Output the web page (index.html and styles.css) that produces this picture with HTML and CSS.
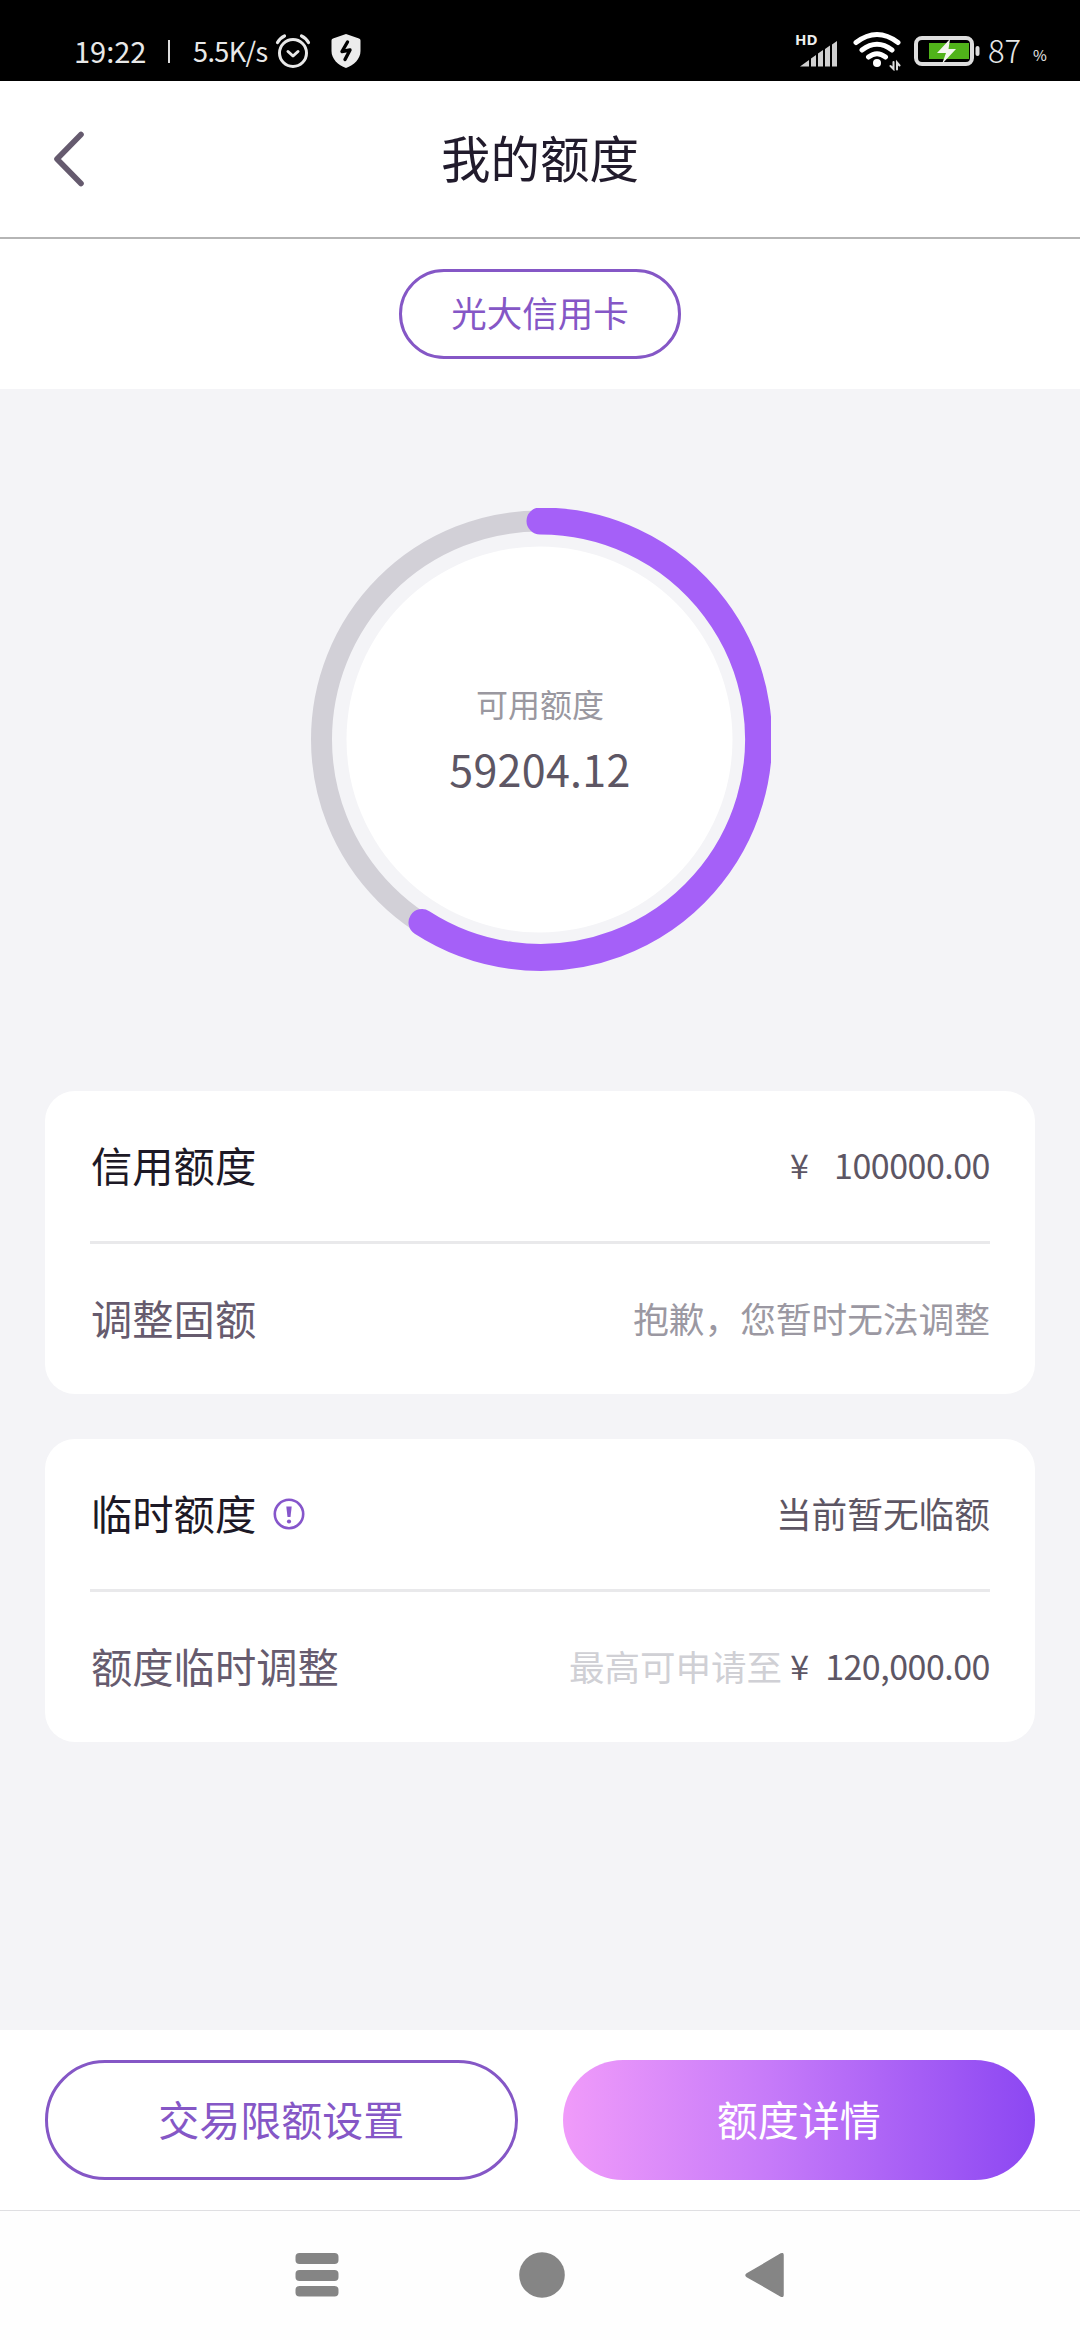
FILE: index.html
```html
<!DOCTYPE html>
<html lang="zh-CN">
<head>
<meta charset="utf-8">
<title>我的额度</title>
<link rel="stylesheet" href="styles.css">
</head>
<body>
<div class="screen">
  <div class="status">
    <span class="time">19:22</span>
    <span class="bar"></span>
    <span class="speed">5.5K/s</span>
    <svg class="alarm" width="36" height="36" viewBox="0 0 36 36" fill="none" stroke="#e8e8e8" stroke-linecap="round">
      <circle cx="18" cy="20" r="13.5" stroke-width="3"/>
      <path d="M13 18.5l5 4.5 5-4.5" stroke-width="3" stroke-linejoin="round"/>
      <path d="M2.5 9.5Q5 5 9.5 3M33.500 9.500Q31 5 26.500 3" stroke-width="3.200"/>
    </svg>
    <svg class="shield" width="30" height="36" viewBox="0 0 30 36">
      <path d="M15 1L28 5.500Q29.500 6 29.500 7.500V18C29.500 26 23 32 15 35C7 32 .5 26 .5 18V7.500Q.5 6 2 5.500Z" fill="#ececec"/>
      <path d="M16.500 9L11 18.500L19 17L14 26.500" fill="none" stroke="#000" stroke-width="3.400" stroke-linejoin="round" stroke-linecap="round"/>
    </svg>
    <span class="spacer"></span>
    <span class="signal">
      <span class="hd">HD</span>
      <svg class="bars" width="38" height="26" viewBox="0 0 38 26" fill="#cfcfcf">
        <path d="M0 25.500L9 19V25.500ZM11 17.500L16 14V25.500H11ZM18 12.500L23 9V25.500H18ZM25 8L30 4.500V25.500H25ZM32 3.500L37 0V25.500H32Z"/>
      </svg>
    </span>
    <svg class="wifi" width="48" height="40" viewBox="0 0 48 40" fill="none" stroke="#fff" stroke-width="5" stroke-linecap="round">
      <path d="M3 11.500Q24 -4.500 45 11.500M9 19Q24 7.500 39 19M15.500 26Q24 19.500 32.500 26"/>
      <circle cx="24" cy="32" r="4" fill="#fff" stroke="none"/>
      <path d="M40.500 31V38L37.500 35M44 38.500V31.500L46.500 34.500" stroke="#ddd" stroke-width="2"/>
    </svg>
    <svg class="battery" width="66" height="32" viewBox="0 0 66 32">
      <rect x="2" y="3" width="56" height="26" rx="6" fill="none" stroke="#dedede" stroke-width="4"/>
      <rect x="15" y="8" width="40" height="16" fill="#50b31a"/>
      <rect x="61.500" y="11" width="4" height="10" rx="2" fill="#dedede"/>
      <path d="M36 4L23 18H32L28 29L42 14H34.500Z" fill="#f2f6ef"/>
    </svg>
    <span class="level">87</span>
    <span class="percent">%</span>
  </div>

  <header class="title-bar">
    <svg class="back" width="34" height="60" viewBox="0 0 34 60" fill="none" stroke="#655a6e" stroke-width="5.600" stroke-linecap="round" stroke-linejoin="round">
      <path d="M29 5.500L5 30L29 54.500"/>
    </svg>
    <h1 class="title">我的额度</h1>
  </header>

  <div class="card-picker"><span class="chip">光大信用卡</span></div>

  <main class="content">
    <div class="gauge">
      <svg class="ring" width="462" height="463" viewBox="0 0 462 463" fill="none">
        <circle cx="231" cy="231.500" r="218.500" stroke="#d2d0d7" stroke-width="21"/>
        <circle cx="230.500" cy="231.500" r="193" fill="#fff"/>
        <path d="M231 13A218.200 218.200 0 1 1 113 414.500" stroke="#a560f8" stroke-width="27" stroke-linecap="round"/>
      </svg>
      <div class="gauge-text">
        <div class="gauge-label">可用额度</div>
        <div class="gauge-value">59204.12</div>
      </div>
    </div>

    <section class="panel">
      <div class="row">
        <span class="name strong">信用额度</span>
        <span class="amount"><span class="yen wide">¥</span><span class="num">100000.00</span></span>
      </div>
      <div class="row">
        <span class="name">调整固额</span>
        <span class="note muted">抱歉，您暂时无法调整</span>
      </div>
    </section>

    <section class="panel">
      <div class="row">
        <span class="name strong">临时额度</span>
        <svg class="info" width="32" height="32" viewBox="0 0 32 32">
          <circle cx="16" cy="16" r="14.200" fill="none" stroke="#8656cb" stroke-width="2.600"/>
          <path d="M13.300 8.500H18.700L17.500 19H14.500Z" fill="#8656cb"/>
          <circle cx="16" cy="23.500" r="2.100" fill="#8656cb"/>
        </svg>
        <span class="note">当前暂无临额</span>
      </div>
      <div class="row">
        <span class="name">额度临时调整</span>
        <span class="amount"><span class="faint">最高可申请至</span><span class="yen">¥</span><span class="num">120,000.00</span></span>
      </div>
    </section>
  </main>

  <footer class="actions">
    <div class="btn outline">交易限额设置</div>
    <div class="btn filled">额度详情</div>
  </footer>

  <nav class="nav">
    <svg width="44" height="46" viewBox="0 0 44 46" fill="#858585">
      <rect x=".5" y="1" width="43" height="11" rx="4"/>
      <rect x=".5" y="18" width="43" height="11" rx="4"/>
      <rect x=".5" y="34" width="43" height="10.500" rx="4"/>
    </svg>
    <svg width="46" height="46" viewBox="0 0 46 46"><circle cx="23" cy="23" r="22.800" fill="#858585"/></svg>
    <svg width="40" height="46" viewBox="0 0 40 46"><path d="M2 22L36 2Q38 1 38 3V43Q38 45 36 44L2 24.500Q0 23.300 2 22Z" fill="#858585" stroke="#858585" stroke-width="1.500"/></svg>
  </nav>
</div>
</body>
</html>
```

FILE: styles.css
```css
* { box-sizing: border-box; }
body {
  margin: 0;
  background: #fff;
  font-family: "Noto Sans CJK SC", sans-serif;
  color: #5d5664;
}
svg { display: block; flex: none; }
.screen {
  width: 1080px;
  height: 2340px;
  display: flex;
  flex-direction: column;
  overflow: hidden;
  white-space: nowrap;
}

/* status bar */
.status {
  flex: none;
  height: 81px;
  padding: 21px 35px 0 74px;
  background: #000;
  color: #e8e8e8;
  display: flex;
  align-items: center;
  line-height: 60px;
}
.time { width: 94px; font-size: 29px; padding-bottom: 2px; }
.bar { width: 2px; height: 23px; background: #ddd; }
.speed { width: 82px; margin-left: 23px; font-size: 27px; letter-spacing: -0.6px; padding-bottom: 1px; }
.alarm { margin: 0 20px 0 0; }
.spacer { flex: 1; }
.signal { width: 44px; margin-right: 14px; height: 32px; display: grid; }
.signal > * { grid-area: 1 / 1; }
.hd { font: bold 15px/9px "Open Sans", sans-serif; color: #eee; }
.bars { align-self: end; margin-left: 5px; }
.wifi { margin-right: 13px; }
.level { width: 45px; margin-left: 8px; font-size: 31px; font-weight: 300; padding-bottom: 3px; }
.percent { width: 12px; font-size: 15px; padding-top: 8px; }

/* header */
.title-bar {
  flex: none;
  height: 158px;
  border-bottom: 2px solid #b5b5b5;
  display: grid;
  grid-template-columns: 84px 1fr 84px;
  align-items: center;
}
.back { margin-left: 52px; }
.title { margin: 0; padding-bottom: 5px; text-align: center; font-size: 49.5px; line-height: 70px; font-weight: 400; color: #211b2c; }
.card-picker { flex: none; height: 150px; display: flex; align-items: center; justify-content: center; }
.chip {
  width: 282px;
  height: 90px;
  border: 3px solid #8557c6;
  border-radius: 45px;
  color: #8557c6;
  font-size: 35.5px;
  line-height: 80px;
  text-align: center;
}

/* content */
.content {
  flex: 1;
  background: #f4f4f7;
  padding: 119px 45px 0;
  display: flex;
  flex-direction: column;
  gap: 45px;
}
.gauge { width: 462px; height: 463px; margin: 0 auto 75px; display: grid; }
.gauge > * { grid-area: 1 / 1; }
.gauge-text { text-align: center; padding-top: 170px; }
.gauge-label { font-size: 32px; line-height: 50px; color: #9a98a0; }
.gauge-value { font-size: 43px; line-height: 60px; margin-top: 10px; letter-spacing: 0.3px; }
.panel { height: 303px; background: #fff; border-radius: 30px; padding: 0 45px; }
.row { height: 150px; padding-bottom: 4px; display: flex; align-items: center; }
.row + .row { height: 153px; border-top: 3px solid #e9e9eb; }
.name { font-size: 41.3px; padding-left: 1px; color: #665b6e; }
.strong { color: #1d1926; }
.note, .amount { margin-left: auto; font-size: 35.7px; }
.amount { display: flex; align-items: center; }
.muted { color: #9b98a2; }
.faint { font-size: 35.5px; color: #d0d0d5; }
.yen { width: 20px; margin: 0 15px 0 8px; font-size: 34px; }
.yen.wide { margin-right: 24px; }
.num { font-size: 34px; letter-spacing: -0.5px; }
.info { margin: 3px 0 0 17px; }

/* bottom */
.actions { flex: none; height: 180px; padding: 30px 45px; display: grid; grid-template-columns: 1fr 1fr; gap: 45px; }
.btn { height: 120px; border-radius: 60px; font-size: 41px; line-height: 116px; text-align: center; }
.outline { border: 3px solid #8557c6; color: #8557c6; line-height: 110px; }
.filled { color: #fff; background: linear-gradient(90deg, #f09bfa 0%, #c77bf9 43%, #8c47f2 100%); }
.nav {
  flex: none;
  height: 130px;
  border-top: 1px solid #dfdfe2;
  background: #fefefe;
  padding: 0 1px 2px 0;
  display: flex;
  align-items: center;
  justify-content: center;
  gap: 180px;
}
```
